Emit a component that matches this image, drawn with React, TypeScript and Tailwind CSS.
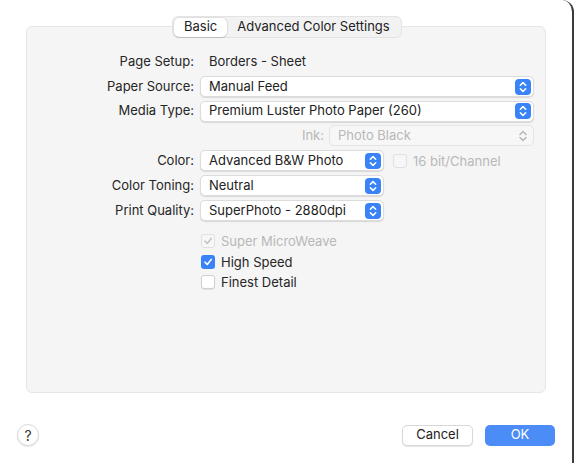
import React from 'react';

const font = { fontFamily: 'Inter, "Noto Sans", sans-serif' };

const Stepper: React.FC<{ disabled?: boolean }> = ({ disabled }) =>
  disabled ? (
    <svg width="16" height="16" viewBox="0 0 16 16" className="shrink-0">
      <path d="M5 6.5 8 3.5 11 6.5M5 9.5 8 12.5 11 9.5" fill="none" stroke="#b4b4b4" strokeWidth="1.4" strokeLinecap="round" strokeLinejoin="round" />
    </svg>
  ) : (
    <div className="flex h-[16px] w-[16px] shrink-0 items-center justify-center rounded-[4px] bg-[#3a82f7]">
      <svg width="16" height="16" viewBox="0 0 16 16">
        <path d="M5.3 6.3 8 3.6 10.7 6.3M5.3 9.7 8 12.4 10.7 9.7" fill="none" stroke="#fff" strokeWidth="1.5" strokeLinecap="round" strokeLinejoin="round" />
      </svg>
    </div>
  );

const Popup: React.FC<{ value: string; width: string; disabled?: boolean }> = ({ value, width, disabled }) => (
  <div
    className={`flex h-[21px] items-center justify-between rounded-[5px] pl-[8px] pr-[2px] ${width} ${
      disabled
        ? 'border border-[#e4e4e4] bg-[#f7f7f7] text-[#b8b8b8]'
        : 'border border-[#dcdcdc] bg-white text-[#222] shadow-[0_1px_1px_rgba(0,0,0,0.12)]'
    }`}
  >
    <span className="truncate">{value}</span>
    <Stepper disabled={disabled} />
  </div>
);

const Row: React.FC<{ label: string; children: React.ReactNode; h?: string }> = ({ label, children, h = 'h-[25px]' }) => (
  <div className={`flex items-center ${h}`}>
    <div className="w-[173px] pr-[6px] text-right text-[#262626]">{label}</div>
    {children}
  </div>
);

const Check: React.FC<{ label: string; checked?: boolean; disabled?: boolean }> = ({ label, checked, disabled }) => {
  let box = 'border border-[#cfcfcf] bg-white shadow-[0_1px_1px_rgba(0,0,0,0.08)]';
  if (checked && !disabled) box = 'bg-[#3a82f7]';
  if (disabled) box = 'border border-[#e0e0e0] bg-[#f7f7f7]';
  return (
    <div className="flex h-[21px] items-center gap-[6px] leading-[16px]">
      <div className={`flex h-[14px] w-[14px] items-center justify-center rounded-[3px] ${box}`}>
        {checked && (
          <svg width="10" height="10" viewBox="0 0 10 10">
            <path d="M2 5.2 4.2 7.5 8.2 2.4" fill="none" stroke={disabled ? '#c4c4c4' : '#fff'} strokeWidth="1.6" strokeLinecap="round" strokeLinejoin="round" />
          </svg>
        )}
      </div>
      <span className={disabled ? 'text-[#b8b8b8]' : 'text-[#262626]'}>{label}</span>
    </div>
  );
};

export default function App() {
  return (
    <div className="h-[463px] w-[576px] overflow-hidden bg-white" style={font}>
      <div className="flex h-[463px] w-[574px] flex-col rounded-tr-[12px] border-r-2 border-[#3c3c3c] bg-white text-[13px]">
        <div className="relative mx-[26px] mt-[26px] h-[367px] rounded-[6px] border border-[#e6e6e6] bg-[#f5f5f5]">
          <div className="absolute left-[145px] top-[-11px] flex h-[22px] items-center rounded-[6px] border border-[#e3e3e3] bg-[#f2f2f2] p-[1px]">
            <div className="flex h-[19px] items-center rounded-[5px] bg-white px-[10px] text-[#222] shadow-[0_0_0_0.5px_rgba(0,0,0,0.15),0_1px_1px_rgba(0,0,0,0.1)]">Basic</div>
            <div className="flex h-[19px] items-center px-[10px] text-[#222]">Advanced Color Settings</div>
          </div>

          <div className="flex flex-col pt-[23px]">
            <Row label="Page Setup:" h="h-[24px]">
              <span className="pl-[9px] text-[#262626]">Borders - Sheet</span>
            </Row>
            <Row label="Paper Source:">
              <Popup value="Manual Feed" width="w-[334px]" />
            </Row>
            <Row label="Media Type:" h="h-[24px]">
              <Popup value="Premium Luster Photo Paper (260)" width="w-[334px]" />
            </Row>
            <div className="flex h-[25px] items-center">
              <div className="w-[302px] pr-[5px] text-right text-[#b8b8b8]">Ink:</div>
              <Popup value="Photo Black" width="w-[205px]" disabled />
            </div>
            <Row label="Color:">
              <Popup value="Advanced B&W Photo" width="w-[184px]" />
              <div className="ml-[9px]">
                <Check label="16 bit/Channel" disabled />
              </div>
            </Row>
            <Row label="Color Toning:">
              <Popup value="Neutral" width="w-[184px]" />
            </Row>
            <Row label="Print Quality:">
              <Popup value="SuperPhoto - 2880dpi" width="w-[184px]" />
            </Row>
            <div className="mt-[8px] flex flex-col gap-0 pl-[174px] [&>div]:h-[20.5px]">
              <Check label="Super MicroWeave" checked disabled />
              <Check label="High Speed" checked />
              <Check label="Finest Detail" />
            </div>
          </div>
        </div>

        <div className="mt-[31px] flex items-center pl-[17px] pr-[17px]">
          <div className="flex h-[22px] w-[22px] items-center justify-center rounded-full border border-[#dadada] bg-white text-[14px] text-[#333] shadow-[0_1px_1px_rgba(0,0,0,0.1)]">?</div>
          <div className="ml-auto flex gap-[12px]">
            <div className="flex h-[21px] w-[71px] items-center justify-center rounded-[5px] border border-[#d8d8d8] bg-white text-[#222] shadow-[0_1px_1px_rgba(0,0,0,0.1)]">Cancel</div>
            <div className="flex h-[21px] w-[70px] items-center justify-center rounded-[5px] bg-[#4b8cf6] text-white">OK</div>
          </div>
        </div>
      </div>
    </div>
  );
}
